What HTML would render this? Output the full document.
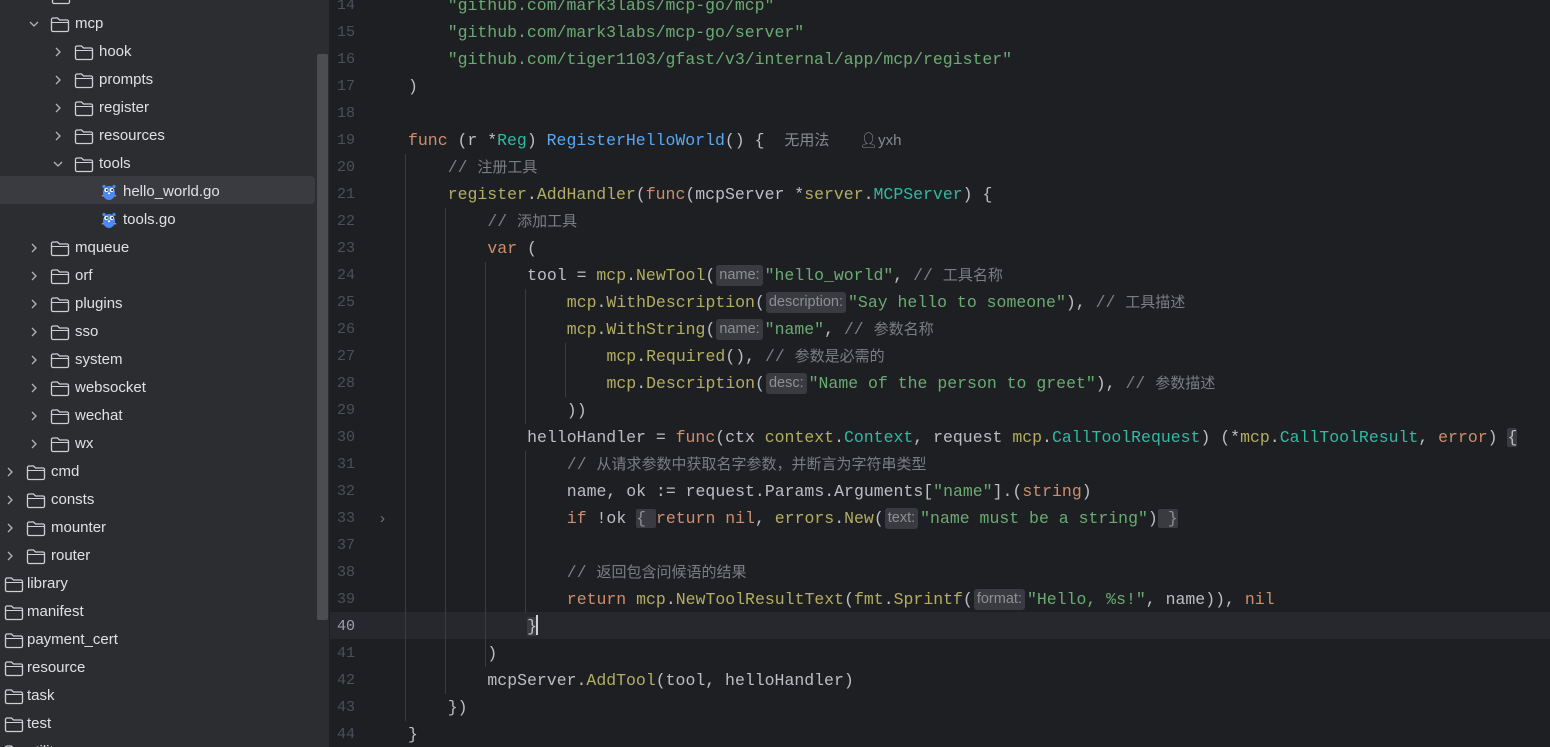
<!DOCTYPE html>
<html style="overflow:hidden;height:747px"><head><meta charset="utf-8"><style>
*{margin:0;padding:0;box-sizing:border-box}
body{width:1550px;height:747px;overflow:hidden;background:#1e1f22;position:relative;font-family:"Liberation Sans","Noto Sans CJK SC",sans-serif}
#side{position:absolute;left:0;top:0;width:330px;height:747px;background:#2b2d30;border-right:1px solid #1e1f22;overflow:hidden}
.it{position:absolute;height:28px;line-height:28px;font-size:15px;color:#dfe1e5;white-space:nowrap}
.it svg{position:absolute;top:6px}
.sel{position:absolute;left:0;top:176px;width:315px;height:28px;background:#393b40;border-radius:0 4px 4px 0}
#sb{position:absolute;left:317px;top:54px;width:11px;height:566px;background:#4b4d51;border-radius:2px}
.ln{position:absolute;left:330px;width:25px;text-align:right;font-family:"Liberation Mono",monospace;font-size:15px;color:#4b5059;height:27px;line-height:27px}
.c{position:absolute;left:408px;height:27px;line-height:27px;font-family:"Liberation Mono","Noto Sans CJK SC",monospace;font-size:16.5px;color:#bcbec4;white-space:pre}
.k{color:#cf8e6d}.f{color:#56a8f5}.s{color:#6aab73}.m{color:#7a7e85}.p{color:#b3ae60}.t{color:#2fbaa3}
.h{display:inline-block;background:#393b40;color:#8c8f94;font-family:"Liberation Sans",sans-serif;font-size:14.5px;line-height:21px;padding:0 3px;border-radius:3px;margin:0 2px 0 1px;vertical-align:1px}
.cm{font-family:"Liberation Sans","Noto Sans CJK SC",sans-serif;font-size:15px}
.g{position:absolute;width:1px;background:#393b40}
.hl{background:#393b40;border-radius:2px}
</style></head><body>
<div id="side">
<div class="sel"></div>
<div id="items"></div>
<div id="sb"></div>
</div>
<div style="position:absolute;left:330px;top:611.5px;width:1220px;height:27px;background:#26282e"></div>
<div id="code" style="position:absolute;left:0;top:0;width:1550px;height:747px;overflow:hidden"></div>
<script>
var folder='<svg width="20" height="17" viewBox="0 0 20 17"><path d="M1.5 3.5a1.5 1.5 0 0 1 1.5-1.5h4.5l2 2H17a1.5 1.5 0 0 1 1.5 1.5v8.5a1.5 1.5 0 0 1-1.5 1.5H3a1.5 1.5 0 0 1-1.5-1.5z" fill="none" stroke="#ced0d6" stroke-width="1.3"/><path d="M1.5 6.5h17" stroke="#ced0d6" stroke-width="1.1"/></svg>';
var go='<svg width="18" height="18" viewBox="0 0 18 18"><ellipse cx="9" cy="10" rx="6" ry="7" fill="#4b8af7"/><circle cx="4" cy="3.5" r="1.6" fill="#4b8af7"/><circle cx="14" cy="3.5" r="1.6" fill="#4b8af7"/><circle cx="6.3" cy="7" r="2" fill="#fff"/><circle cx="11.7" cy="7" r="2" fill="#fff"/><circle cx="6.8" cy="7" r="1" fill="#222"/><circle cx="12.2" cy="7" r="1" fill="#222"/><rect x="8" y="9.5" width="2" height="1.6" fill="#fff"/><rect x="1.8" y="12" width="2" height="1.5" fill="#c98a6a"/><rect x="14.2" y="12" width="2" height="1.5" fill="#c98a6a"/></svg>';
function chev(d){return d?'<svg width="12" height="12" viewBox="0 0 12 12" style="top:8px"><path d="M2 4l4 4 4-4" fill="none" stroke="#b0b3b8" stroke-width="1.3"/></svg>':'<svg width="12" height="12" viewBox="0 0 12 12" style="top:8px"><path d="M4 2l4 4-4 4" fill="none" stroke="#b0b3b8" stroke-width="1.3"/></svg>';}
var rows=[[2,null,'mcp',1],[3,0,'hook'],[3,0,'prompts'],[3,0,'register'],[3,0,'resources'],[3,1,'tools'],[4,'g','hello_world.go'],[4,'g','tools.go'],[2,0,'mqueue'],[2,0,'orf'],[2,0,'plugins'],[2,0,'sso'],[2,0,'system'],[2,0,'websocket'],[2,0,'wechat'],[2,0,'wx'],[1,0,'cmd'],[1,0,'consts'],[1,0,'mounter'],[1,0,'router'],[0,'n','library'],[0,'n','manifest'],[0,'n','payment_cert'],[0,'n','resource'],[0,'n','task'],[0,'n','test'],[0,'n','utility']];
var h='';
h+='<div class="it" style="top:-18px;left:0"><span style="position:absolute;left:51px;top:0">'+folder.replace('<svg','<svg style="position:absolute;left:0;top:6px"')+'</span></div>';
rows.forEach(function(r,i){
 var top=10+i*28; var lv=r[0]; var base=lv*24;
 var s='';
 if(r[1]==='g'){ s+='<span style="position:absolute;left:'+(base+4)+'px">'+go.replace('<svg','<svg style="position:absolute;top:5px"')+'</span><span style="position:absolute;left:'+(base+27)+'px">'+r[2]+'</span>';}
 else if(r[1]==='n'){ s+='<span style="position:absolute;left:4px">'+folder.replace('<svg','<svg style="position:absolute;top:6px"')+'</span><span style="position:absolute;left:27px">'+r[2]+'</span>';}
 else { var d=(r[1]===1||r[3]===1); s+='<span style="position:absolute;left:'+(base-20)+'px">'+chev(d)+'</span><span style="position:absolute;left:'+(base+2)+'px">'+folder.replace('<svg','<svg style="position:absolute;top:6px"')+'</span><span style="position:absolute;left:'+(base+27)+'px">'+r[2]+'</span>';}
 h+='<div class="it" style="top:'+top+'px;left:0;width:315px">'+s+'</div>';
});
document.getElementById('items').innerHTML=h;
function H(t){return '<span class="h">'+t+'</span>';}
function C(t){return '<span class="m">// </span><span class="m cm">'+t+'</span>';}
var L=[
[14,1,'<span class="s">"github.com/mark3labs/mcp-go/mcp"</span>'],
[15,1,'<span class="s">"github.com/mark3labs/mcp-go/server"</span>'],
[16,1,'<span class="s">"github.com/tiger1103/gfast/v3/internal/app/mcp/register"</span>'],
[17,0,')'],[18,0,''],
[19,0,'<span class="k">func</span> (r *<span class="t">Reg</span>) <span class="f">RegisterHelloWorld</span>() {  <span class="cm" style="color:#868a91">无用法</span>   <span style="color:#868a91;font-family:Liberation Sans;font-size:15px">&#x1F464;&#xFE0E;yxh</span>'],
[20,1,C('注册工具')],
[21,1,'<span class="p">register</span>.<span class="p">AddHandler</span>(<span class="k">func</span>(mcpServer *<span class="p">server</span>.<span class="t">MCPServer</span>) {'],
[22,2,C('添加工具')],
[23,2,'<span class="k">var</span> ('],
[24,3,'tool = <span class="p">mcp</span>.<span class="p">NewTool</span>('+H('name:')+'<span class="s">"hello_world"</span>, '+C('工具名称')],
[25,4,'<span class="p">mcp</span>.<span class="p">WithDescription</span>('+H('description:')+'<span class="s">"Say hello to someone"</span>), '+C('工具描述')],
[26,4,'<span class="p">mcp</span>.<span class="p">WithString</span>('+H('name:')+'<span class="s">"name"</span>, '+C('参数名称')],
[27,5,'<span class="p">mcp</span>.<span class="p">Required</span>(), '+C('参数是必需的')],
[28,5,'<span class="p">mcp</span>.<span class="p">Description</span>('+H('desc:')+'<span class="s">"Name of the person to greet"</span>), '+C('参数描述')],
[29,4,'))'],
[30,3,'helloHandler = <span class="k">func</span>(ctx <span class="p">context</span>.<span class="t">Context</span>, request <span class="p">mcp</span>.<span class="t">CallToolRequest</span>) (*<span class="p">mcp</span>.<span class="t">CallToolResult</span>, <span class="k">error</span>) <span class="hl">{</span>'],
[31,4,C('从请求参数中获取名字参数，并断言为字符串类型')],
[32,4,'name, ok := request.Params.Arguments[<span class="s">"name"</span>].(<span class="k">string</span>)'],
[33,4,'<span class="k">if</span> !ok <span class="hl" style="color:#8c8f94">{ </span><span class="k">return nil</span>, <span class="p">errors</span>.<span class="p">New</span>('+H('text:')+'<span class="s">"name must be a string"</span>)<span class="hl" style="color:#8c8f94"> }</span>'],
[37,0,''],
[38,4,C('返回包含问候语的结果')],
[39,4,'<span class="k">return</span> <span class="p">mcp</span>.<span class="p">NewToolResultText</span>(<span class="p">fmt</span>.<span class="p">Sprintf</span>('+H('format:')+'<span class="s">"Hello, %s!"</span>, name)), <span class="k">nil</span>'],
[40,3,'<span class="hl">}</span><span style="display:inline-block;width:2px;height:20px;background:#ced0d6;vertical-align:-4px;margin-left:-1px"></span>'],
[41,2,')'],
[42,2,'mcpServer.<span class="p">AddTool</span>(tool, helloHandler)'],
[43,1,'})'],
[44,0,'}']
];
function Y(n){var r=n<=33?n-14:n-17;return -8.5+r*27;}
var o='';
L.forEach(function(l){var y=Y(l[0]);
o+='<div class="ln" style="top:'+y+'px;'+(l[0]==40?'color:#a1a3ab':'')+'">'+l[0]+'</div>';
o+='<div class="c" style="top:'+y+'px;left:'+(408+l[1]*39.7)+'px">'+l[2]+'</div>';});
o+='<div style="position:absolute;left:380px;top:'+(Y(33)+5)+'px;color:#6f737a;font-size:15px">&#x203A;</div>';
function G(x,a,b){o+='<div class="g" style="left:'+x+'px;top:'+Y(a)+'px;height:'+(Y(b)+27-Y(a))+'px"></div>';}
G(405,20,43);G(445,22,42);G(485,24,41);G(525,25,29);G(565,27,28);G(525,31,39);
document.getElementById('code').innerHTML=o;
</script>
</body></html>
